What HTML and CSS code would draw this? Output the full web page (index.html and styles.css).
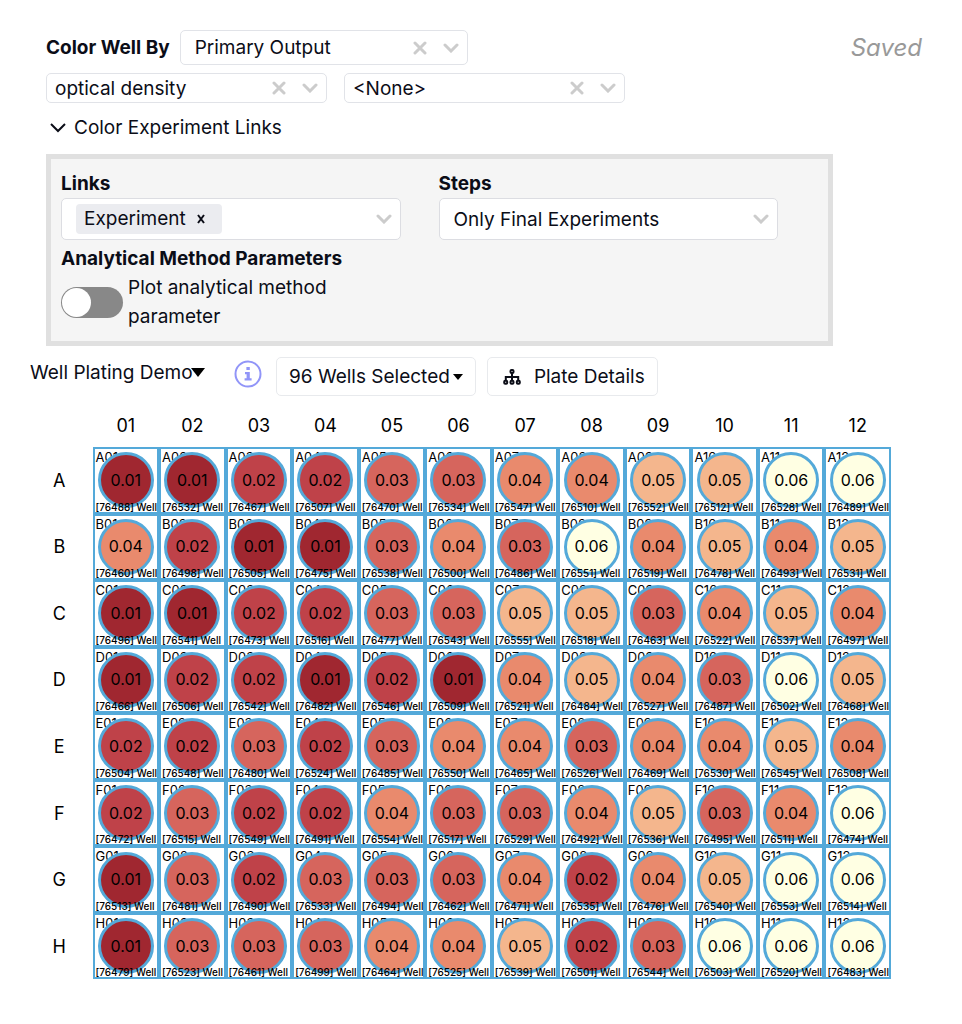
FILE: index.html
```html
<!DOCTYPE html>
<html lang="en">
<head>
    <meta charset="UTF-8">
    <meta name="viewport" content="width=device-width, initial-scale=1.0">
    <title>Well Plating Demo</title>
    <link rel="stylesheet" href="styles.css">
</head>
<body>
    <svg class="sprite" aria-hidden="true">
        <symbol id="icon-clear" viewBox="0 0 14 14">
            <path d="M2 2l10 10M12 2L2 12" />
        </symbol>
        <symbol id="icon-chevron" viewBox="0 0 16 10">
            <path d="M2 2l6 6 6-6" />
        </symbol>
    </svg>

    <header class="settings">
        <div class="settings-fields">
            <div class="field-row">
                <label class="field-label" for="color-by">Color Well By</label>
                <div class="select select-main">
                    <select id="color-by"><option>Primary Output</option></select>
                    <button class="clear" type="button" aria-label="Clear color"><svg class="icon-clear"><use href="#icon-clear" /></svg></button>
                    <svg class="icon-chevron"><use href="#icon-chevron" /></svg>
                </div>
            </div>
            <div class="field-row field-row-outputs">
                <div class="select select-small">
                    <select aria-label="Output"><option>optical density</option></select>
                    <button class="clear" type="button" aria-label="Clear output"><svg class="icon-clear"><use href="#icon-clear" /></svg></button>
                    <svg class="icon-chevron"><use href="#icon-chevron" /></svg>
                </div>
                <div class="select select-small">
                    <select aria-label="Second output"><option>&lt;None&gt;</option></select>
                    <button class="clear" type="button" aria-label="Clear second output"><svg class="icon-clear"><use href="#icon-clear" /></svg></button>
                    <svg class="icon-chevron"><use href="#icon-chevron" /></svg>
                </div>
            </div>
        </div>
        <span class="status">Saved</span>
    </header>

    <main>
        <details class="links" open>
            <summary>
                <svg class="icon-toggle" viewBox="0 0 16 10"><path d="M1 1l7 7 7-7" /></svg>
                Color Experiment Links
            </summary>
            <div class="links-panel">
                <div class="links-field">
                    <span class="field-label" id="links-label">Links</span>
                    <div class="select select-large" role="group" aria-labelledby="links-label">
                        <span class="tag">
                            Experiment
                            <button class="tag-remove" type="button" aria-label="Remove Experiment"><svg viewBox="0 0 10 10"><path d="M2 1l6 8M8 1L2 9" /></svg></button>
                        </span>
                        <svg class="icon-chevron"><use href="#icon-chevron" /></svg>
                    </div>
                </div>
                <div class="links-field">
                    <label class="field-label" for="steps">Steps</label>
                    <div class="select select-large">
                        <select id="steps"><option>Only Final Experiments</option></select>
                        <svg class="icon-chevron"><use href="#icon-chevron" /></svg>
                    </div>
                </div>
                <div class="links-field">
                    <span class="field-label">Analytical Method Parameters</span>
                    <div class="switch-row">
                        <input class="switch" type="checkbox" id="plot-parameter">
                        <label for="plot-parameter">Plot analytical method parameter</label>
                    </div>
                </div>
            </div>
        </details>

        <div class="toolbar">
            <div class="plate-select">
                <select aria-label="Plate"><option>Well Plating Demo</option></select>
                <svg class="caret-large" viewBox="0 0 14 9"><path d="M0 0h14L7 9z" /></svg>
            </div>
            <button class="info" type="button" aria-label="Plate information">
                <svg viewBox="0 0 28 28">
                    <circle cx="14" cy="14" r="12.5" />
                    <path class="info-i" d="M12.4 7h3.4v3h-3.4zM11 12h4.8v6.2h1.8v2.3h-7v-2.3h2v-3.9H11z" />
                </svg>
            </button>
            <button class="button" type="button">
                96 Wells Selected
                <svg class="caret" viewBox="0 0 10 6"><path d="M0 0h10L5 6z" /></svg>
            </button>
            <button class="button button-details" type="button">
                <svg class="icon-tree" viewBox="0 0 18 16">
                    <path d="M9 4.5v6.5M2.8 11.5V8h12.4v3.5" />
                    <rect x="7.5" y="1" width="3" height="3" rx="1" />
                    <rect x="1.2" y="11.8" width="3" height="3" rx="1" />
                    <rect x="7.5" y="11.8" width="3" height="3" rx="1" />
                    <rect x="13.8" y="11.8" width="3" height="3" rx="1" />
                </svg>
                Plate Details
            </button>
        </div>

        <table class="plate" aria-label="Well plate">
            <thead id="plate-head"></thead>
            <tbody id="plate-body"></tbody>
        </table>
    </main>

    <script>
        // Each well is [id, optical density in hundredths]
        const plate = {
            A: [[76488, 1], [76532, 1], [76467, 2], [76507, 2], [76470, 3], [76534, 3], [76547, 4], [76510, 4], [76552, 5], [76512, 5], [76528, 6], [76489, 6]],
            B: [[76460, 4], [76498, 2], [76505, 1], [76475, 1], [76538, 3], [76500, 4], [76486, 3], [76551, 6], [76519, 4], [76478, 5], [76493, 4], [76531, 5]],
            C: [[76496, 1], [76541, 1], [76473, 2], [76516, 2], [76477, 3], [76543, 3], [76555, 5], [76518, 5], [76463, 3], [76522, 4], [76537, 5], [76497, 4]],
            D: [[76466, 1], [76506, 2], [76542, 2], [76482, 1], [76546, 2], [76509, 1], [76521, 4], [76484, 5], [76527, 4], [76487, 3], [76502, 6], [76468, 5]],
            E: [[76504, 2], [76548, 2], [76480, 3], [76524, 2], [76485, 3], [76550, 4], [76465, 4], [76526, 3], [76469, 4], [76530, 4], [76545, 5], [76508, 4]],
            F: [[76472, 2], [76515, 3], [76549, 2], [76491, 2], [76554, 4], [76517, 3], [76529, 3], [76492, 4], [76536, 5], [76495, 3], [76511, 4], [76474, 6]],
            G: [[76513, 1], [76481, 3], [76490, 2], [76533, 3], [76494, 3], [76462, 3], [76471, 4], [76535, 2], [76476, 4], [76540, 5], [76553, 6], [76514, 6]],
            H: [[76479, 1], [76523, 3], [76461, 3], [76499, 3], [76464, 4], [76525, 4], [76539, 5], [76501, 2], [76544, 3], [76503, 6], [76520, 6], [76483, 6]]
        };

        const columns = plate.A.map((well, i) => String(i + 1).padStart(2, '0'));

        function renderWell(row, column, [id, level]) {
            return `<td class="well">
                <span class="well-name">${row}${column}</span>
                <span class="well-value level-${level}">0.0${level}</span>
                <span class="well-id">[${id}] Well</span>
            </td>`;
        }

        document.getElementById('plate-head').innerHTML =
            `<tr><td></td>${columns.map(column => `<th scope="col">${column}</th>`).join('')}</tr>`;

        document.getElementById('plate-body').innerHTML = Object.entries(plate).map(([row, wells]) =>
            `<tr><th scope="row">${row}</th>${wells.map((well, i) => renderWell(row, columns[i], well)).join('')}</tr>`
        ).join('');
    </script>
</body>
</html>
```
FILE: styles.css
```css
* {
    box-sizing: border-box;
}
body {
    margin: 0;
    padding: 30px 40px 40px 26px;
    font-family: Inter, "Liberation Sans", sans-serif;
    font-size: 19px;
    line-height: 29px;
    color: #0b0d17;
    background-color: #fff;
}
button, select, input {
    font: inherit;
    color: inherit;
    margin: 0;
}
button {
    padding: 0;
    border: 0;
    background: none;
    cursor: pointer;
}
.sprite {
    display: none;
}

/* Settings */
.settings {
    display: flex;
    justify-content: space-between;
    padding-left: 20px;
}
.field-row {
    display: flex;
    align-items: center;
    gap: 10px;
    margin-bottom: 8px;
}
.field-row-outputs {
    gap: 17px;
}
.field-label {
    font-weight: 700;
}
.status {
    font-size: 24px;
    line-height: 35px;
    font-style: italic;
    color: #999;
}
.select {
    display: flex;
    align-items: center;
    border: 1px solid #e1e3e8;
    border-radius: 5px;
    background-color: #fff;
    padding-right: 8px;
}
.select select {
    flex: 1;
    min-width: 0;
    padding: 0;
    border: 0;
    background: none;
    appearance: none;
}
.select-main {
    width: 288px;
    height: 35px;
    padding-left: 14px;
}
.select-small {
    width: 281px;
    height: 30px;
    padding-left: 8px;
}
.select-large {
    height: 42px;
    padding-left: 14px;
    border-color: #dcdde2;
}
.clear {
    display: flex;
    margin-right: 16px;
}
.icon-clear, .icon-chevron {
    fill: none;
    stroke: #ccc;
    stroke-width: 3;
    stroke-linecap: round;
}
.icon-clear {
    width: 14px;
    height: 14px;
}
.icon-chevron {
    width: 16px;
    height: 10px;
    margin-left: auto;
}

/* Experiment links */
.links {
    padding-left: 20px;
}
.links summary {
    display: flex;
    align-items: center;
    gap: 8px;
    padding: 2px 0 0 4px;
    list-style: none;
    cursor: pointer;
}
.icon-toggle {
    width: 16px;
    height: 10px;
    fill: none;
    stroke: #0b0d17;
    stroke-width: 2;
}
.links-panel {
    display: grid;
    grid-template-columns: 1fr 1fr;
    column-gap: 38px;
    row-gap: 4px;
    max-width: 787px;
    margin-top: 12px;
    padding: 10px 50px 10px 10px;
    border: 5px solid #e0e0e0;
    background-color: #f5f5f5;
}
.links-field .field-label {
    display: block;
}
.tag {
    display: flex;
    align-items: center;
    gap: 10px;
    padding: 0 16px 0 8px;
    border-radius: 4px;
    line-height: 30px;
    background-color: #ebecf0;
}
.tag-remove {
    display: flex;
}
.tag-remove svg {
    width: 10px;
    height: 10px;
    fill: none;
    stroke: #0b0d17;
    stroke-width: 2;
}
.switch-row {
    display: flex;
    align-items: center;
    gap: 5px;
}
.switch-row label {
    max-width: 220px;
}
.switch {
    flex: none;
    display: flex;
    width: 62px;
    height: 31px;
    padding: 1px;
    border-radius: 16px;
    background-color: #888;
    appearance: none;
    cursor: pointer;
}
.switch::before {
    content: "";
    width: 29px;
    height: 29px;
    border-radius: 50%;
    background-color: #fff;
}
.switch:checked {
    justify-content: flex-end;
    background-color: #54a9d9;
}

/* Toolbar */
.toolbar {
    display: flex;
    align-items: center;
    gap: 11px;
    margin-top: 11px;
    padding-left: 4px;
}
.plate-select {
    position: relative;
    width: 176px;
    margin-right: 17px;
    padding-bottom: 8px;
}
.plate-select select {
    width: 100%;
    padding: 0;
    border: 0;
    background: none;
    appearance: none;
}
.caret-large {
    position: absolute;
    top: 10px;
    right: 1px;
    width: 14px;
    height: 9px;
}
.info {
    display: flex;
    padding-bottom: 5px;
    margin-right: 3px;
}
.info svg {
    width: 28px;
    height: 28px;
    fill: none;
    stroke: #9195f8;
    stroke-width: 2;
}
.info .info-i {
    fill: #9195f8;
    stroke: none;
}
.button {
    display: flex;
    align-items: center;
    gap: 3px;
    height: 39px;
    padding: 0 12px;
    border: 1px solid #e8eaed;
    border-radius: 5px;
    background-color: #fff;
}
.button-details {
    gap: 13px;
    padding-left: 15px;
}
.caret {
    width: 10px;
    height: 6px;
}
.icon-tree {
    width: 18px;
    height: 16px;
    fill: none;
    stroke: #0b0d17;
    stroke-width: 2;
}

/* Plate */
.plate {
    display: block;
    max-width: 865px;
    margin-top: 15px;
}
.plate thead, .plate tbody {
    display: block;
}
.plate tr {
    display: grid;
    grid-template-columns: repeat(13, 1fr);
    align-items: center;
}
.plate th {
    padding: 0;
    font-size: 18px;
    font-weight: 400;
    text-align: center;
    color: #000;
}
.plate thead tr {
    padding-bottom: 7px;
}
/* the name sits under the circle, the id on top of it */
.well {
    display: grid;
    grid-template: 100% / 100%;
    place-items: center;
    aspect-ratio: 1;
    min-width: 0;
    padding: 0;
    border: 2px solid #54a9d9;
    color: #000;
}
.well > span {
    grid-area: 1 / 1;
}
.well-name {
    place-self: start;
    padding-left: 1px;
    font-size: 13px;
    line-height: 16px;
}
.well-value {
    display: flex;
    align-items: center;
    justify-content: center;
    width: 56px;
    height: 56px;
    border: 3px solid #54a9d9;
    border-radius: 50%;
    font-size: 16px;
    z-index: 1;
}
.well-id {
    place-self: end start;
    padding-left: 1px;
    font-size: 10px;
    font-weight: 500;
    line-height: 10px;
    white-space: nowrap;
    z-index: 2;
}
.level-1 { background-color: #a02730; }
.level-2 { background-color: #bf4249; }
.level-3 { background-color: #d6655d; }
.level-4 { background-color: #e98a6d; }
.level-5 { background-color: #f4b68d; }
.level-6 { background-color: #ffffe3; }

@media (max-width: 700px) {
    .field-row {
        flex-wrap: wrap;
    }
    .links-panel {
        grid-template-columns: 1fr;
        padding-right: 10px;
    }
    .toolbar {
        flex-wrap: wrap;
    }
}
```
